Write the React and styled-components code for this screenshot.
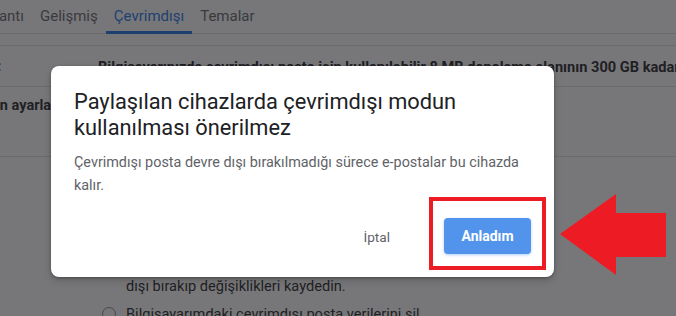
import React from "react";
import styled, { createGlobalStyle } from "styled-components";

const Global = createGlobalStyle`
  html, body { margin: 0; padding: 0; background: #ffffff; }
  body {
    width: 676px; height: 316px; overflow: hidden; position: relative;
    font-family: Roboto, "Liberation Sans", Arial, sans-serif;
  }
`;

const Page = styled.div`
  width: 676px;
  height: 316px;
  overflow: hidden;
  position: relative;
  background: #ffffff;
`;

const Tabs = styled.nav`
  display: flex;
  height: 34px;
  border-bottom: 1px solid #e0e0e0;
  box-sizing: border-box;
`;

const Tab = styled.div`
  flex: none;
  padding: 0 8px;
  display: flex;
  align-items: center;
  font-size: 15px;
  color: ${(p) => (p.$active ? "#1a73e8" : "#5f6368")};
  border-bottom: 3px solid ${(p) => (p.$active ? "#1a73e8" : "transparent")};
  margin-bottom: -1px;
  white-space: nowrap;
  ${(p) => p.$lead && `width: 140px; margin-left: -124px; justify-content: flex-end;`}
`;

const Gap = styled.div`
  height: 11px;
  border-bottom: 1px solid #e0e0e0;
`;

const Row = styled.div`
  display: grid;
  grid-template-columns: 194px 1fr;
  margin-left: -96px;
  border-bottom: 1px solid ${(p) => (p.$last ? "transparent" : "#e0e0e0")};
  height: ${(p) => p.$h}px;
  box-sizing: border-box;
  padding-top: ${(p) => p.$pt}px;
`;

const Label = styled.div`
  font-size: 14.5px;
  font-weight: 700;
  color: #202124;
  white-space: nowrap;
`;

const Value = styled.div`
  font-size: 14.6px;
  font-weight: 700;
  color: #202124;
  white-space: nowrap;
`;

const Options = styled.div`
  display: flex;
  flex-direction: column;
  gap: 8px;
  max-width: 430px;
`;

const Option = styled.div`
  display: flex;
  gap: 10px;
  font-size: 14.6px;
  line-height: 20px;
  color: #202124;
`;

const Radio = styled.span`
  flex: none;
  width: 14px;
  height: 14px;
  border: 1px solid #80868b;
  border-radius: 50%;
  box-sizing: border-box;
  margin-top: 3px;
  margin-left: 4px;
`;

const Backdrop = styled.div`
  position: absolute;
  inset: 0;
  background: rgba(32, 33, 36, 0.61);
`;

const Dialog = styled.div`
  position: absolute;
  left: 51px;
  top: 66px;
  width: 503px;
  height: 211px;
  box-sizing: border-box;
  background: #ffffff;
  border-radius: 8px;
  box-shadow: 0 1px 3px rgba(0, 0, 0, 0.3), 0 4px 8px rgba(0, 0, 0, 0.15);
  padding: 23px 8px 7px 23px;
  display: flex;
  flex-direction: column;
`;

const Title = styled.h2`
  margin: 0;
  font-family: Roboto, "Liberation Sans", Arial, sans-serif;
  font-weight: 400;
  font-size: 21.8px;
  line-height: 26px;
  color: #202124;
  padding-right: 40px;
`;

const Body = styled.p`
  margin: 10px 0 0;
  font-size: 14.4px;
  line-height: 23px;
  color: #5f6368;
  padding-right: 10px;
`;

const Actions = styled.div`
  margin-top: auto;
  display: flex;
  justify-content: flex-end;
  align-items: center;
  gap: 39px;
`;

const TextButton = styled.button`
  border: 0;
  background: none;
  font-family: inherit;
  font-size: 13.6px;
  font-weight: 400;
  color: #5f6368;
  padding: 0;
  margin-top: 6px;
`;

const Highlight = styled.div`
  border: 4px solid #ed1c24;
  padding: 17px 11px 12px 11px;
  display: flex;
`;

const PrimaryButton = styled.button`
  width: 87px;
  height: 36px;
  border: 0;
  border-radius: 4px;
  background: #5294ec;
  color: #ffffff;
  font-family: inherit;
  font-size: 14px;
  font-weight: 700;
  box-shadow: 0 1px 3px rgba(26, 115, 232, 0.35);
`;

const Arrow = styled.svg`
  position: absolute;
  left: 560px;
  top: 194px;
`;

export default function App() {
  return (
    <Page>
      <Global />
      <Tabs>
        <Tab $lead>Sohbet ve toplantı</Tab>
        <Tab>Gelişmiş</Tab>
        <Tab $active>Çevrimdışı</Tab>
        <Tab>Temalar</Tab>
      </Tabs>
      <Gap />
      <Row $h={41} $pt={12}>
        <Label>Depolama yeri:</Label>
        <Value>
          Bilgisayarınızda çevrimdışı posta için kullanılabilir 8 MB depolama alanının 300 GB kadarı
        </Value>
      </Row>
      <Row $h={70} $pt={10}>
        <Label>Senkronizasyon ayarları:</Label>
        <Value />
      </Row>
      <Row $h={160} $pt={99} $last>
        <Label />
        <Options>
          <Option>
            <Radio />
            <span>
              Çevrimdışı verileri bilgisayarımda tut. Çevrimdışı postayı devre
              dışı bırakıp değişiklikleri kaydedin.
            </span>
          </Option>
          <Option>
            <Radio />
            <span>Bilgisayarımdaki çevrimdışı posta verilerini sil.</span>
          </Option>
        </Options>
      </Row>
      <Backdrop />
      <Dialog role="dialog">
        <Title>Paylaşılan cihazlarda çevrimdışı modun kullanılması önerilmez</Title>
        <Body>
          Çevrimdışı posta devre dışı bırakılmadığı sürece e-postalar bu cihazda kalır.
        </Body>
        <Actions>
          <TextButton>İptal</TextButton>
          <Highlight>
            <PrimaryButton>Anladım</PrimaryButton>
          </Highlight>
        </Actions>
      </Dialog>
      <Arrow width="107" height="82" viewBox="0 0 107 82">
        <polygon points="0,40 56,0 56,19 106,19 106,63 56,63 56,81" fill="#ed1c24" />
      </Arrow>
    </Page>
  );
}
